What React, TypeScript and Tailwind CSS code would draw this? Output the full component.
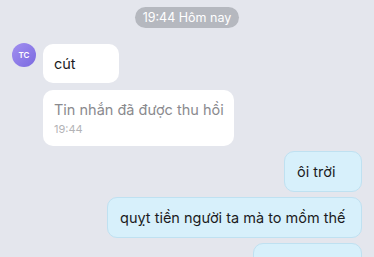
export default function App() {
  return (
    <div
      className="w-[374px] h-[257px] overflow-hidden bg-[#e4e6ed] flex flex-col"
      style={{ fontFamily: "Inter, 'Noto Sans', sans-serif" }}
    >
      {/* time divider */}
      <div className="flex justify-center pt-[7px]">
        <div className="h-[21px] w-[104px] rounded-full bg-[#b5b8bf] text-white text-[12.5px] leading-[21px] text-center">
          19:44 Hôm nay
        </div>
      </div>

      {/* incoming */}
      <div className="flex items-start mt-[15px] pl-[12px]">
        <div className="w-[24px] h-[24px] rounded-full bg-gradient-to-br from-[#a28ff0] to-[#7b6ae0] flex items-center justify-center text-white text-[8px] font-semibold">
          TC
        </div>
        <div className="ml-[7px] mt-[1px] flex flex-col items-start gap-[7px]">
          <div className="min-w-[76px] h-[39px] rounded-[10px] bg-white px-[11px] text-[14.5px] leading-[39px] text-[#1c1c1e]">
            cút
          </div>
          <div className="w-[191px] h-[56px] rounded-[10px] bg-white px-[11px] pt-[11px]">
            <div className="text-[14.5px] leading-[18px] text-[#8a8a8e] whitespace-nowrap">Tin nhắn đã được thu hồi</div>
            <div className="text-[11px] leading-[14px] mt-[3px] text-[#b3b3b6]">19:44</div>
          </div>
        </div>
      </div>

      {/* outgoing */}
      <div className="flex flex-col items-end pr-[12px] mt-[5px] gap-[5px]">
        <div className="min-w-[78px] h-[41px] rounded-[10px] bg-[#d7f0fb] border border-[#bfe1f1] px-[12px] text-[14.5px] leading-[39px] text-[#1c1c1e]">
          ôi trời
        </div>
        <div className="w-[255px] h-[41px] rounded-[10px] bg-[#d7f0fb] border border-[#bfe1f1] px-[12px] text-[14.5px] leading-[39px] text-[#1c1c1e] whitespace-nowrap">
          quỵt tiền người ta mà to mồm thế
        </div>
        <div className="w-[109px] h-[41px] rounded-[10px] bg-[#d7f0fb] border border-[#bfe1f1]" />
      </div>
    </div>
  );
}
